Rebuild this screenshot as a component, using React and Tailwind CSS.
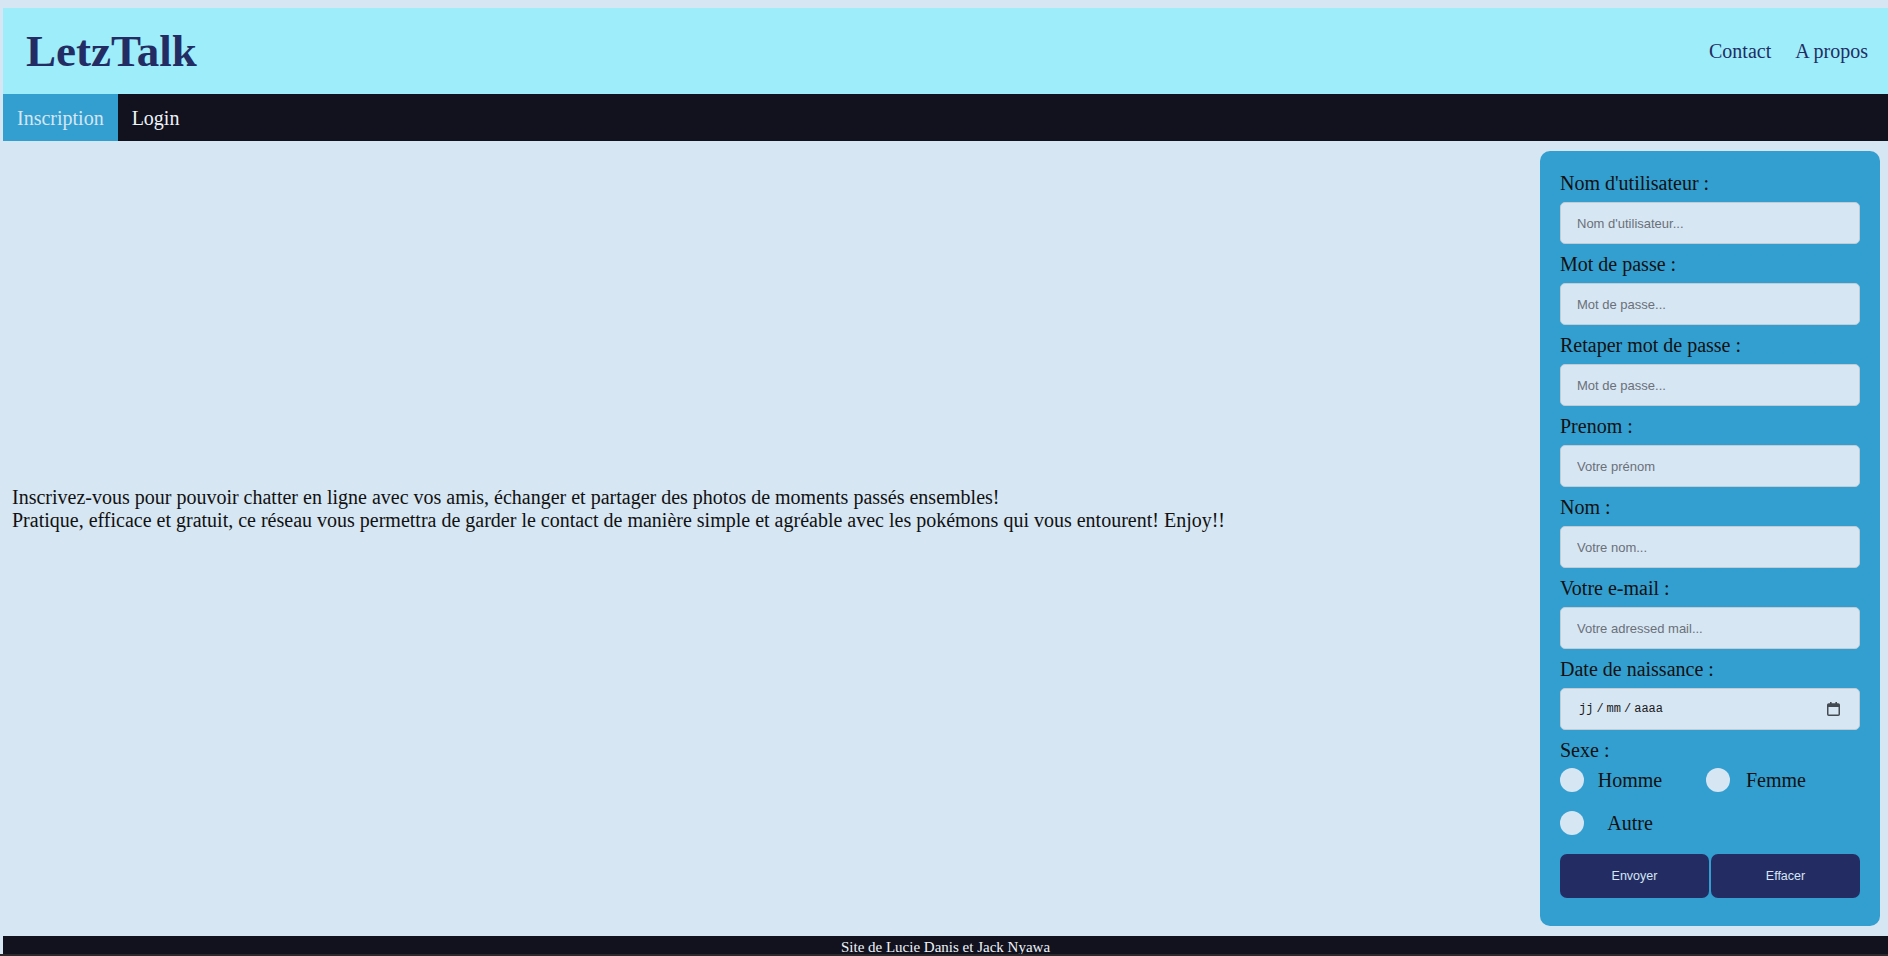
import React from "react";

const fields = [
  { label: "Nom d'utilisateur :", placeholder: "Nom d'utilisateur...", type: "text" },
  { label: "Mot de passe :", placeholder: "Mot de passe...", type: "password" },
  { label: "Retaper mot de passe :", placeholder: "Mot de passe...", type: "password" },
  { label: "Prenom :", placeholder: "Votre prénom", type: "text" },
  { label: "Nom :", placeholder: "Votre nom...", type: "text" },
  { label: "Votre e-mail :", placeholder: "Votre adressed mail...", type: "email" },
];

function CalendarIcon() {
  return (
    <svg width="13" height="14" viewBox="0 0 13 14" className="text-[#444a52]">
      <rect x="3" y="0" width="1.6" height="3" fill="currentColor" />
      <rect x="8.4" y="0" width="1.6" height="3" fill="currentColor" />
      <rect x="0.75" y="2" width="11.5" height="11.25" rx="1" fill="none" stroke="currentColor" strokeWidth="1.5" />
      <rect x="0.75" y="2" width="11.5" height="3" fill="currentColor" />
    </svg>
  );
}

function Radio({ label, wide }) {
  return (
    <label className={`flex items-center ${wide ? "w-[146px]" : ""}`}>
      <input type="radio" name="sexe" className="appearance-none w-[24px] h-[24px] rounded-full bg-[#d6e6f3] m-0" />
      <span className="w-[92px] text-center">{label}</span>
    </label>
  );
}

export default function App() {
  return (
    <div className="h-[956px] overflow-hidden bg-[#d6e6f3] pt-[8px] pl-[3px] flex flex-col font-['Liberation_Serif','Times_New_Roman',serif]">
      {/* en-tete */}
      <header className="h-[86px] shrink-0 bg-[#9deefa] flex items-center justify-between pl-[23px] pr-[20px]">
        <h1 className="text-[45px] font-bold text-[#232d64] leading-none">LetzTalk</h1>
        <nav className="flex gap-[24px] text-[20px] text-[#232d64]">
          <a href="#">Contact</a>
          <a href="#">A propos</a>
        </nav>
      </header>

      <div className="h-[47px] shrink-0 bg-[#12121f] flex text-[20px]">
        <a href="#" className="bg-[#339fd0] px-[14px] flex items-center text-[#d6e6f3]">Inscription</a>
        <a href="#" className="px-[14px] flex items-center text-[#eef3f8]">Login</a>
      </div>

      <main className="flex-1 flex min-h-0">
        <div className="flex-1 flex items-center pl-[9px] pb-[60px] text-[20px] leading-[23px] text-[#111]">
          <p>
            Inscrivez-vous pour pouvoir chatter en ligne avec vos amis, échanger et partager des photos de moments passés ensembles!
            <br />
            Pratique, efficace et gratuit, ce réseau vous permettra de garder le contact de manière simple et agréable avec les pokémons qui vous entourent! Enjoy!!
          </p>
        </div>

        <form className="w-[340px] shrink-0 my-[10px] mr-[8px] bg-[#339fd0] rounded-[10px] pt-[21px] px-[20px] pb-[28px] text-[20px] leading-[23px] text-[#111]">
          {fields.map((f, i) => (
            <div key={i} className="mb-[9px]">
              <label className="block mb-[7px]">{f.label}</label>
              <input
                type={f.type}
                placeholder={f.placeholder}
                className="block w-full h-[42px] rounded-[5px] border border-[#c2ccd4] bg-[#d6e6f3] pl-[16px] text-[13px] font-['Liberation_Sans',Arial,sans-serif] placeholder:text-[#6b7079] outline-none"
              />
            </div>
          ))}

          <div className="mb-[9px]">
            <label className="block mb-[7px]">Date de naissance :</label>
            <div className="w-full h-[42px] rounded-[5px] border border-[#c2ccd4] bg-[#d6e6f3] pl-[18px] pr-[19px] flex items-center justify-between font-['Liberation_Mono',monospace] text-[12px] text-[#1a1a1a]">
              <span>
                jj<span className="mx-[3px]">/</span>mm<span className="mx-[3px]">/</span>aaaa
              </span>
              <CalendarIcon />
            </div>
          </div>

          <label className="block">Sexe :</label>
          <div className="mt-[6px] flex flex-col gap-[19px]">
            <div className="flex h-[24px]">
              <Radio label="Homme" wide />
              <Radio label="Femme" />
            </div>
            <div className="flex h-[24px]">
              <Radio label="Autre" />
            </div>
          </div>

          <div className="mt-[19px] flex gap-[2px] font-['Liberation_Sans',Arial,sans-serif] text-[12.5px]">
            <button type="submit" className="flex-1 h-[44px] rounded-[7px] bg-[#232d64] text-[#d6e6f3]">Envoyer</button>
            <button type="reset" className="flex-1 h-[44px] rounded-[7px] bg-[#232d64] text-[#d6e6f3]">Effacer</button>
          </div>
        </form>
      </main>

      <footer className="h-[18px] shrink-0 overflow-hidden bg-[#12121f] text-center text-[15px] leading-[22px] text-[#eef3f8]">
        Site de Lucie Danis et Jack Nyawa
      </footer>
      <div className="h-[2px] shrink-0 -ml-[3px] bg-[#2a2a2c]" />
    </div>
  );
}
